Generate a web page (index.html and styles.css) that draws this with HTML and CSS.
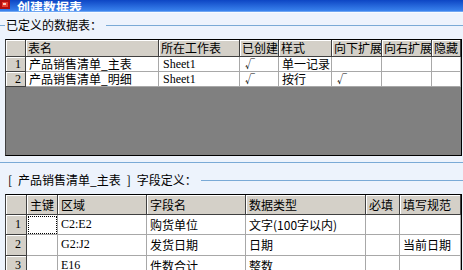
FILE: index.html
```html
<!DOCTYPE html>
<html lang="zh-CN">

<head>
	<meta charset="UTF-8">
	<title>创建数据表</title>
	<link rel="stylesheet" href="styles.css">
</head>

<body>
	<div class="window">
		<div class="titlebar">
			<svg class="title_icon" width="11" height="11" viewBox="0 0 11 11">
				<rect x="0" y="1" width="10" height="9" fill="#b01010"/>
				<rect x="2" y="3" width="6" height="5" fill="#e84030"/>
				<rect x="3" y="4" width="3" height="2" fill="#f8d0c0"/>
			</svg>
			<span class="title_text">创建数据表</span>
		</div>

		<div class="panel">
			<div class="caption caption_lead"><span class="caption_text">已定义的数据表：</span></div>

			<!-- Tables grid -->
			<div class="grid grid_tables">
				<div class="row head">
					<div class="cell fixed"></div>
					<div class="cell fixed">表名</div>
					<div class="cell fixed">所在工作表</div>
					<div class="cell fixed">已创建</div>
					<div class="cell fixed">样式</div>
					<div class="cell fixed">向下扩展</div>
					<div class="cell fixed">向右扩展</div>
					<div class="cell fixed">隐藏</div>
				</div>
				<div class="row">
					<div class="cell fixed num">1</div>
					<div class="cell">产品销售清单_主表</div>
					<div class="cell latin">Sheet1</div>
					<div class="cell check">√</div>
					<div class="cell">单一记录</div>
					<div class="cell"></div>
					<div class="cell"></div>
					<div class="cell"></div>
				</div>
				<div class="row">
					<div class="cell fixed num">2</div>
					<div class="cell">产品销售清单_明细</div>
					<div class="cell latin">Sheet1</div>
					<div class="cell check">√</div>
					<div class="cell">按行</div>
					<div class="cell check">√</div>
					<div class="cell"></div>
					<div class="cell"></div>
				</div>
			</div>

			<div class="divider"></div>

			<div class="caption"><span class="caption_text">[&ensp;产品销售清单_主表&ensp;]&ensp;字段定义：</span></div>

			<!-- Fields grid -->
			<div class="grid grid_fields">
				<div class="row head">
					<div class="cell fixed"></div>
					<div class="cell fixed">主键</div>
					<div class="cell fixed">区域</div>
					<div class="cell fixed">字段名</div>
					<div class="cell fixed">数据类型</div>
					<div class="cell fixed">必填</div>
					<div class="cell fixed">填写规范</div>
				</div>
				<div class="row">
					<div class="cell fixed num">1</div>
					<div class="cell focused"></div>
					<div class="cell latin">C2:E2</div>
					<div class="cell">购货单位</div>
					<div class="cell">文字(100字以内)</div>
					<div class="cell"></div>
					<div class="cell"></div>
				</div>
				<div class="row">
					<div class="cell fixed num">2</div>
					<div class="cell"></div>
					<div class="cell latin">G2:J2</div>
					<div class="cell">发货日期</div>
					<div class="cell">日期</div>
					<div class="cell"></div>
					<div class="cell">当前日期</div>
				</div>
				<div class="row">
					<div class="cell fixed num">3</div>
					<div class="cell"></div>
					<div class="cell latin">E16</div>
					<div class="cell">件数合计</div>
					<div class="cell">整数</div>
					<div class="cell"></div>
					<div class="cell"></div>
				</div>
			</div>
		</div>
	</div>
</body>

</html>
```

FILE: styles.css
```css
* {
	box-sizing: border-box;
}

body {
	margin: 0;
	background-color: #edf3fc;
	font-family: "Noto Sans CJK SC", sans-serif;
	font-size: 12px;
	color: #000;
	overflow: hidden;
}

.window {
	width: 463px;
	height: 270px;
	overflow: hidden;
}

.titlebar {
	height: 12px;
	display: flex;
	align-items: flex-end;
	overflow: hidden;
	background: linear-gradient(#0d46c4, #3a83ee);
	border-bottom: 1px solid #6fa6f2;
}

.title_icon {
	flex: none;
	margin-bottom: 1px;
}

.title_text {
	margin-left: 6px;
	margin-bottom: -4px;
	font-size: 13px;
	font-weight: bold;
	line-height: 16px;
	color: #fff;
}

.panel {
	display: flex;
	flex-direction: column;
	border-top: 1px solid #f8fbff;
}

.caption {
	display: flex;
	align-items: center;
	height: 14px;
	margin-top: 10px;
	padding-left: 8px;
}

.caption_lead {
	margin-top: 5px;
	padding-left: 0;
}

.caption_lead::before {
	content: "";
	width: 5px;
	height: 1px;
	margin-right: 1px;
	background-color: #7aaad6;
}

.caption::after {
	content: "";
	flex: 1;
	height: 1px;
	margin-left: 4px;
	background-color: #7aaad6;
}

.caption_text {
	line-height: 14px;
	white-space: pre;
}

.divider {
	height: 1px;
	margin-top: 6px;
	background-color: #7aaad6;
}

.grid {
	margin-top: 7px;
	margin-left: 5px;
	width: 457px;
	border: 1px solid #000;
	border-left-color: #404040;
	background-color: #808080;
}

.grid_tables {
	height: 117px;
}

.grid_fields {
	height: 90px;
	border-bottom: 0;
}

.row {
	display: grid;
}

.grid_tables .row {
	grid-template-columns: 20px 133px 81px 39px 53px 50px 50px 29px;
	height: 15px;
}

.grid_tables .row.head {
	height: 17px;
}

.grid_fields .row {
	grid-template-columns: 21px 31px 89px 99px 120px 34px 61px;
	height: 20px;
}

.grid_fields .row:nth-child(3) {
	height: 21px;
}

.cell {
	background-color: #fff;
	border-right: 1px solid #a8a8a8;
	border-bottom: 1px solid #a8a8a8;
	padding-left: 3px;
	white-space: nowrap;
	overflow: hidden;
	line-height: 14px;
}

.grid_fields .cell {
	line-height: 19px;
	padding-left: 3px;
}

.fixed {
	background-color: #d4d0c8;
	border-right-color: #404040;
	border-bottom-color: #404040;
	box-shadow: inset 1px 1px #fff;
	padding-left: 2px;
}

.head .cell {
	line-height: 16px;
}

.grid_fields .head .cell {
	line-height: 19px;
}

.num {
	font-family: "Liberation Serif", serif;
	font-size: 12px;
	text-align: right;
	padding-right: 4px;
}

.grid_fields .num {
	padding-right: 5px;
}

.latin {
	font-family: "Liberation Serif", serif;
	font-size: 12px;
	padding-left: 4px;
}

.check {
	font-size: 10px;
	padding-left: 5px;
}

.focused {
	outline: 1px dotted #000;
	outline-offset: -2px;
}
```
